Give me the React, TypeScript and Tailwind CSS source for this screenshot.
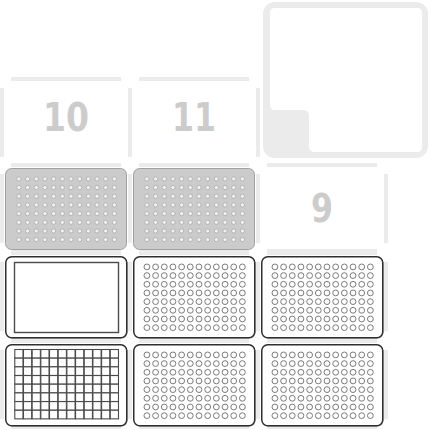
const COLS = [0, 128, 256];
const ROW_TOPS = [77, 163, 251, 339]; // slot rows 10-12, 7-9, 4-6, 1-3
const PITCH = 8.68;

type Kind = 'gray' | 'wells' | 'reservoir' | 'squares';

// [col, row, kind]
const labware: [number, number, Kind][] = [
  [0, 1, 'gray'],
  [1, 1, 'gray'],
  [0, 2, 'reservoir'],
  [1, 2, 'wells'],
  [2, 2, 'wells'],
  [0, 3, 'squares'],
  [1, 3, 'wells'],
  [2, 3, 'wells'],
];

const labels = [
  { text: '10', x: 66, y: 131, w: 46 },
  { text: '11', x: 194, y: 131, w: 44 },
  { text: '9', x: 322, y: 222, w: 22 },
];

function SlotOutline({ x, y }: { x: number; y: number }) {
  return (
    <g fill="#ebebeb">
      <rect x={x + 11} y={y} width={110} height={4} />
      <rect x={x + 11} y={y + 86} width={110} height={4} />
      <rect x={x} y={y + 11} width={4} height={69} />
      <rect x={x + 128} y={y + 11} width={4} height={69} />
    </g>
  );
}

function wellGrid(fn: (cx: number, cy: number, key: string) => React.ReactNode) {
  const out: React.ReactNode[] = [];
  for (let r = 0; r < 8; r++) {
    for (let c = 0; c < 12; c++) {
      out.push(fn(13.9 + c * PITCH, 10.9 + r * PITCH, `${r}-${c}`));
    }
  }
  return out;
}

function Plate({ x, y, kind }: { x: number; y: number; kind: Kind }) {
  if (kind === 'gray') {
    return (
      <g transform={`translate(${x} ${y})`}>
        <rect x={0.5} y={0.5} width={121} height={81} rx={6} fill="#cbcbcb" stroke="#a0a0a0" strokeWidth={1} />
        {wellGrid((cx, cy, k) => (
          <circle key={k} cx={cx} cy={cy} r={2.1} fill="#f2f2f2" stroke="#ababab" strokeWidth={0.8} />
        ))}
      </g>
    );
  }
  return (
    <g transform={`translate(${x} ${y})`}>
      <rect x={1.5} y={1.5} width={121} height={81} rx={6} fill="#9a9a9a" />
      <rect x={0.75} y={0.75} width={121} height={81} rx={6} fill="#ffffff" stroke="#2f2f2f" strokeWidth={1.5} />
      {kind === 'reservoir' && (
        <rect x={9.5} y={6.5} width={104} height={70} fill="#ffffff" stroke="#4a4a4a" strokeWidth={1.4} />
      )}
      {kind === 'wells' &&
        wellGrid((cx, cy, k) => (
          <circle key={k} cx={cx} cy={cy} r={2.9} fill="#ffffff" stroke="#5a5a5a" strokeWidth={0.8} />
        ))}
      {kind === 'squares' &&
        wellGrid((cx, cy, k) => (
          <rect key={k} x={cx - 4.1} y={cy - 5.4} width={8.2} height={8.6} fill="#ffffff" stroke="#4a4a4a" strokeWidth={1.1} />
        ))}
    </g>
  );
}

export default function App() {
  return (
    <div className="w-[430px] h-[430px] bg-white overflow-hidden">
      <svg width={430} height={430} viewBox="0 0 430 430" className="block">
        {ROW_TOPS.map((y) => COLS.map((x) => <SlotOutline key={`${x}-${y}`} x={x} y={y} />))}

        {/* fixed trash */}
        <rect x={263} y={2} width={165} height={156} rx={12} fill="#ebebeb" />
        <path
          d="M275 8 H417 Q422 8 422 13 V147 Q422 152 417 152 H315 Q309 152 309 146 V116 Q309 110 303 110 H275 Q270 110 270 105 V13 Q270 8 275 8 Z"
          fill="#ffffff"
        />

        {labels.map((l) => (
          <text
            key={l.text}
            x={l.x}
            y={l.y}
            textAnchor="middle"
            textLength={l.w}
            lengthAdjust="spacingAndGlyphs"
            fill="#cccccc"
            fontWeight={700}
            fontSize={39}
            fontFamily="'DejaVu Sans', sans-serif"
          >
            {l.text}
          </text>
        ))}

        {labware.map(([c, r, kind]) => (
          <Plate key={`${c}-${r}`} x={COLS[c] + 5} y={ROW_TOPS[r] + 5} kind={kind} />
        ))}
      </svg>
    </div>
  );
}
